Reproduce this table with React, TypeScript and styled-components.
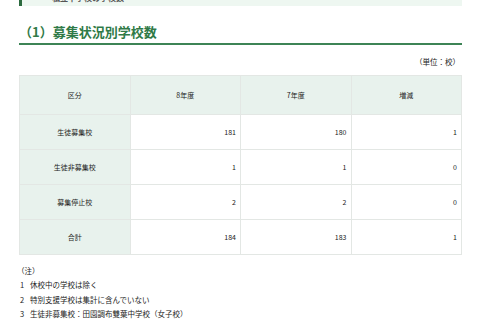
import React from 'react'
import styled, { createGlobalStyle } from 'styled-components'

const rows = [
  { name: '生徒募集校', y8: 181, y7: 180, diff: 1 },
  { name: '生徒非募集校', y8: 1, y7: 1, diff: 0 },
  { name: '募集停止校', y8: 2, y7: 2, diff: 0 },
  { name: '合計', y8: 184, y7: 183, diff: 1 },
]

const notes = [
  '休校中の学校は除く',
  '特別支援学校は集計に含んでいない',
  '生徒非募集校：田園調布雙葉中学校（女子校）',
  '募集停止校：成女学園中学校（女子校）、東邦音楽大学附属東邦中学校（男女校）',
]

const App: React.FC = () => {
  return (
    <Page>
      <GlobalStyle />
      <LeadBox>
        <LeadText>私立中学校の学校数</LeadText>
      </LeadBox>
      <Heading>（1）募集状況別学校数</Heading>
      <Unit>（単位：校）</Unit>
      <Table>
        <thead>
          <tr>
            <HeadCell>区分</HeadCell>
            <HeadCell>8年度</HeadCell>
            <HeadCell>7年度</HeadCell>
            <HeadCell>増減</HeadCell>
          </tr>
        </thead>
        <tbody>
          {rows.map(r => (
            <tr key={r.name}>
              <RowHead>{r.name}</RowHead>
              <NumCell>{r.y8}</NumCell>
              <NumCell>{r.y7}</NumCell>
              <NumCell>{r.diff}</NumCell>
            </tr>
          ))}
        </tbody>
      </Table>
      <Notes>
        <NoteTitle>（注）</NoteTitle>
        {notes.map((n, i) => (
          <NoteLine key={i}>
            <NoteNum>{i + 1}</NoteNum>
            <span>{n}</span>
          </NoteLine>
        ))}
      </Notes>
    </Page>
  )
}

/* Styles */
const GlobalStyle = createGlobalStyle`
  body {
    margin: 0;
    background: #fff;
    font-family: "Noto Sans CJK JP", "Noto Sans", sans-serif;
    color: #222;
  }
`

const Page = styled.div`
  width: 443px;
  padding-left: 19px;
  height: 320px;
  overflow: hidden;
`

const LeadBox = styled.div`
  height: 6px;
  overflow: hidden;
  background: #eef7f1;
  border-left: 3px solid #2c6a3f;
`

const LeadText = styled.p`
  margin: -8px 0 0 30px;
  font-size: 8px;
  line-height: 12px;
  font-weight: bold;
  color: #555;
`

const Heading = styled.h2`
  margin: 16px 0 0;
  padding: 0 0 1px 0;
  font-size: 13px;
  line-height: 20px;
  font-weight: bold;
  color: #2f7a47;
  border-bottom: 2px solid #3d8456;
`

const Unit = styled.div`
  margin-top: 11px;
  text-align: right;
  font-size: 7.5px;
  line-height: 12px;
  padding-right: 2px;
`

const Table = styled.table`
  margin-top: 7px;
  width: 443px;
  table-layout: fixed;
  border-collapse: collapse;
  font-size: 7px;
  border: 1px solid #e3e7e4;

  th, td {
    border: 1px solid #e3e7e4;
  }

  tbody tr {
    height: 35px;
  }
`

const HeadCell = styled.th`
  height: 36px;
  background: #e8f2ed;
  font-weight: normal;
  text-align: center;
`

const RowHead = styled.td`
  background: #e8f2ed;
  text-align: center;
`

const NumCell = styled.td`
  text-align: right;
  padding-right: 4px;
`

const Notes = styled.div`
  margin-top: 9px;
  font-size: 7.5px;
  line-height: 14.3px;
`

const NoteTitle = styled.div`
  margin-left: -2px;
`

const NoteLine = styled.div`
  display: flex;
  gap: 6px;
  padding-left: 1px;
  white-space: nowrap;
`

const NoteNum = styled.span`
  width: 4px;
`

export default App
